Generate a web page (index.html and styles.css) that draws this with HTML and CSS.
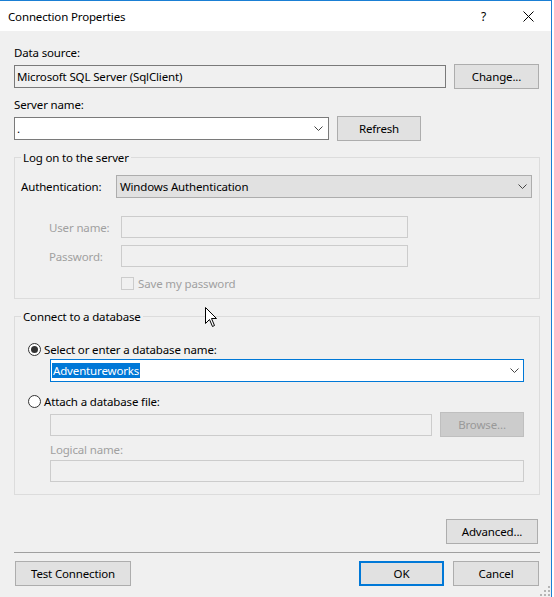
FILE: index.html
```html
<!DOCTYPE html>
<html>
<head>
<meta charset="utf-8">
<title>Connection Properties</title>
<link rel="stylesheet" href="styles.css">
</head>
<body>
<div class="window">
  <div class="titlebar">
    <span class="title">Connection Properties</span>
    <span class="help">?</span>
    <span class="close"><svg width="11" height="11" viewBox="0 0 11 11"><path d="M0.5 0.5L10.5 10.5M10.5 0.5L0.5 10.5" stroke="#000" stroke-width="1" fill="none"/></svg></span>
  </div>
  <div class="content">
    <div class="label">Data source:</div>
    <div class="row r-ds">
      <div class="box readonly ds-box">Microsoft SQL Server (SqlClient)</div>
      <button class="btn change">Change...</button>
    </div>

    <div class="label server-label">Server name:</div>
    <div class="row r-server">
      <div class="box combo server-combo"><span class="val">.</span><svg class="chev" width="9" height="5" viewBox="0 0 9 5"><polyline points="0.5,0.5 4.5,4.5 8.5,0.5" fill="none" stroke="#444" stroke-width="1"/></svg></div>
      <button class="btn refresh">Refresh</button>
    </div>

    <fieldset class="group logon">
      <legend>Log on to the server</legend>
      <div class="auth-row">
        <span class="auth-label">Authentication:</span>
        <div class="box dropdown auth-combo"><span class="val">Windows Authentication</span><svg class="chev" width="9" height="5" viewBox="0 0 9 5"><polyline points="0.5,0.5 4.5,4.5 8.5,0.5" fill="none" stroke="#444" stroke-width="1"/></svg></div>
      </div>
      <div class="cred-row first">
        <span class="cred-label disabled">User name:</span>
        <div class="box disabled-box cred-box"></div>
      </div>
      <div class="cred-row second">
        <span class="cred-label disabled">Password:</span>
        <div class="box disabled-box cred-box"></div>
      </div>
      <div class="check-row">
        <span class="checkbox"></span>
        <span class="disabled">Save my password</span>
      </div>
    </fieldset>

    <fieldset class="group connect">
      <legend>Connect to a database</legend>
      <div class="radio-row first">
        <span class="radio checked"></span>
        <span>Select or enter a database name:</span>
      </div>
      <div class="box combo focused db-combo"><span class="sel">Adventureworks</span><svg class="chev" width="9" height="5" viewBox="0 0 9 5"><polyline points="0.5,0.5 4.5,4.5 8.5,0.5" fill="none" stroke="#444" stroke-width="1"/></svg></div>
      <div class="radio-row second">
        <span class="radio"></span>
        <span>Attach a database file:</span>
      </div>
      <div class="row file-row">
        <div class="box disabled-box file-box"></div>
        <button class="btn btn-disabled browse">Browse...</button>
      </div>
      <div class="label disabled logical-label">Logical name:</div>
      <div class="box disabled-box logical-box"></div>
    </fieldset>

    <div class="adv-row">
      <button class="btn advanced">Advanced...</button>
    </div>
    <div class="separator"></div>
    <div class="bottom-row">
      <button class="btn test">Test Connection</button>
      <span class="spacer"></span>
      <button class="btn default ok">OK</button>
      <button class="btn cancel">Cancel</button>
    </div>
  </div>

  <svg class="cursor" width="13" height="21" viewBox="0 0 13 21"><path d="M0.5 0.5 L0.5 16.5 L4.5 12.5 L7.5 19.5 L9.5 18.5 L6.5 11.5 L11.5 11.5 Z" fill="#fff" stroke="#000" stroke-width="1" stroke-linejoin="miter"/></svg>
  <svg class="grip" width="10" height="10" viewBox="0 0 10 10">
    <rect x="8" y="0" width="2" height="2" fill="#b5b5b5"/>
    <rect x="4" y="4" width="2" height="2" fill="#b5b5b5"/>
    <rect x="8" y="4" width="2" height="2" fill="#b5b5b5"/>
    <rect x="0" y="8" width="2" height="2" fill="#b5b5b5"/>
    <rect x="4" y="8" width="2" height="2" fill="#b5b5b5"/>
    <rect x="8" y="8" width="2" height="2" fill="#b5b5b5"/>
  </svg>
</div>
</body>
</html>
```

FILE: styles.css
```css
* { box-sizing: border-box; }
html, body { margin: 0; padding: 0; background: #ffffff; }
body {
  font-family: "Noto Sans", "Open Sans", sans-serif;
  font-size: 11.5px;
  letter-spacing: -0.15px;
  line-height: 15px;
  color: #000;
}
.window {
  position: relative;
  width: 552px;
  height: 597px;
  background: #f0f0f0;
  border-top: 1px solid #1a7fd4;
  border-right: 1px solid #1a7fd4;
  overflow: hidden;
}
.titlebar {
  height: 30px;
  background: #fff;
  display: flex;
  align-items: center;
  padding: 0 17px 0 8px;
}
.title { flex: 1; }
.help { margin-right: 37px; font-size: 12px; }
.close { display: flex; }
.close svg { display: block; }

.content { padding: 14px 11px 0 14px; }
.label { height: 15px; }
.row { display: flex; align-items: center; gap: 8px; }

.box {
  border: 1px solid #7a7a7a;
  background: #fff;
  height: 23px;
  display: flex;
  align-items: center;
  white-space: nowrap;
  overflow: hidden;
}
.readonly { background: #f0f0f0; padding-left: 2px; }
.combo { padding: 0 5px 0 2px; }
.combo .val, .dropdown .val { flex: 1; }
.chev { display: block; flex: none; }
.dropdown { background: #e1e1e1; border-color: #adadad; padding: 0 4px 0 3px; }
.disabled-box { background: #f0f0f0; border-color: #cccccc; height: 22px; }
.disabled { color: #a0a0a0; }

.btn {
  font: inherit;
  letter-spacing: inherit;
  color: #000;
  background: #e1e1e1;
  border: 1px solid #adadad;
  height: 25px;
  padding: 0;
  margin: 0;
  text-align: center;
}
.btn.default { border: 2px solid #0078d7; }
.btn-disabled { background: #cccccc; border-color: #bfbfbf; color: #999999; }

.r-ds { margin-top: 4px; height: 25px; }
.ds-box { width: 432px; }
.change { width: 85px; }

.server-label { margin-top: 8px; }
.r-server { margin-top: 4px; height: 25px; }
.server-combo { width: 315px; }
.refresh { width: 84px; }

.group {
  margin: 0;
  padding: 0;
  border: 1px solid #dcdcdc;
  min-width: 0;
}
.group legend {
  margin-left: 6px;
  padding: 0 2px;
  line-height: 15px;
  height: 15px;
}
.logon { margin-top: 9px; padding-bottom: 8px; }
.auth-row { display: flex; align-items: center; margin-top: 10px; padding-left: 6px; padding-right: 7px; }
.auth-label { width: 95px; flex: none; }
.auth-combo { flex: 1; }
.cred-row { display: flex; align-items: center; padding-left: 34px; }
.cred-row.first { margin-top: 18px; }
.cred-row.second { margin-top: 7px; }
.cred-label { width: 72px; flex: none; }
.cred-box { width: 287px; }
.check-row { display: flex; align-items: center; height: 13px; margin-top: 10px; padding-left: 106px; }
.checkbox {
  width: 13px; height: 13px;
  border: 1px solid #cccccc;
  background: #f0f0f0;
  margin-right: 4px;
  flex: none;
}

.connect { margin-top: 10px; padding-bottom: 12px; }
.radio-row { display: flex; align-items: center; height: 15px; padding-left: 13px; }
.radio-row.first { margin-top: 18px; }
.radio-row.second { margin-top: 12px; }
.radio {
  width: 13px; height: 13px;
  border: 1px solid #333333;
  border-radius: 50%;
  background: #fff;
  margin-right: 3px;
  flex: none;
  position: relative;
}
.radio.checked::after {
  content: "";
  position: absolute;
  left: 2px; top: 2px;
  width: 7px; height: 7px;
  border-radius: 50%;
  background: #333333;
}
.db-combo { margin: 2px 15px 0 35px; padding: 0 4px 0 1px; }
.focused { border-color: #0078d7; }
.db-combo .sel { background: #0078d7; color: #fff; line-height: 15px; padding: 0 1px; margin-right: auto; }
.file-row { margin-top: 3px; margin-left: 35px; height: 25px; }
.file-box { width: 382px; }
.browse { width: 84px; }
.logical-label { margin-top: 5px; margin-left: 35px; }
.logical-box { margin: 3px 15px 0 35px; }

.adv-row { display: flex; justify-content: flex-end; margin-top: 24px; padding-right: 2px; }
.advanced { width: 92px; }
.separator { margin-top: 8px; height: 1px; background: #a0a0a0; }
.bottom-row { display: flex; margin-top: 8px; padding: 0 1px; gap: 9px; }
.test { width: 116px; }
.spacer { flex: 1; }
.ok { width: 85px; }
.cancel { width: 86px; }

.cursor { position: absolute; left: 205px; top: 306px; }
.grip { position: absolute; right: 1px; bottom: 1px; }
```
